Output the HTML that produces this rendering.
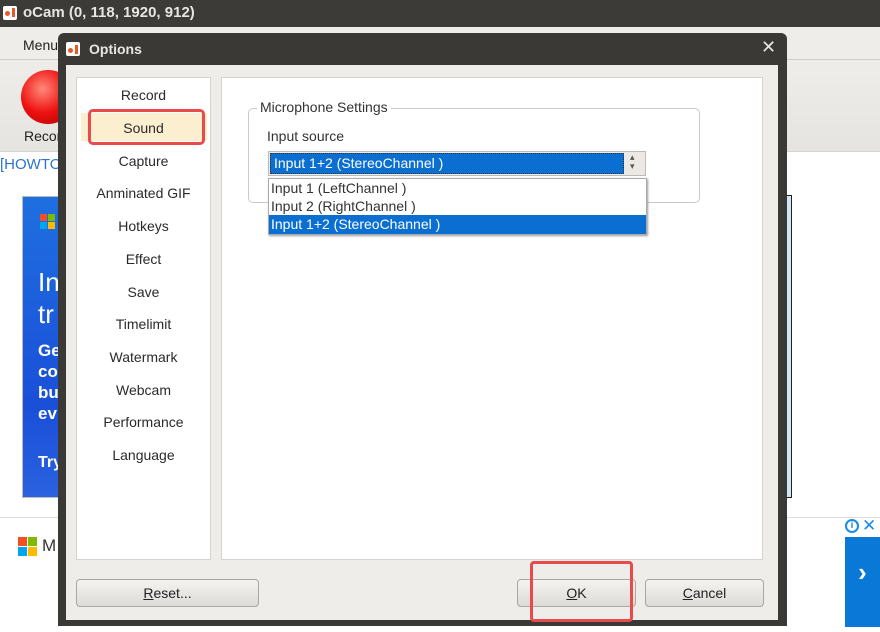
<!DOCTYPE html>
<html><head><style>
*{margin:0;padding:0;box-sizing:border-box}
body{width:880px;height:632px;overflow:hidden;background:#fff;font-family:"Liberation Sans","DejaVu Sans",sans-serif;position:relative;font-size:14px;color:#222}
.a{position:absolute}
.list div{position:absolute;left:0;width:135px;text-align:center;font-size:14px;color:#2a2a2a}
.btn{position:absolute;height:28px;border:1px solid #a9a7a3;border-radius:4px;background:linear-gradient(#f4f3f1,#dddbd7);text-align:center;line-height:26px;font-size:14px;color:#222}
</style></head><body>
<div class="a" style="left:0;top:0;width:880px;height:27px;background:#3c3b37"></div>
<div class="a" style="left:3px;top:6px;width:14px;height:14px;background:#fff;border-radius:2px"></div>
<div class="a" style="left:5px;top:11px;width:5px;height:5px;background:#e55a2b;border-radius:50%"></div>
<div class="a" style="left:12px;top:8px;width:3px;height:9px;background:#e55a2b"></div>
<div class="a" style="left:23px;top:4px;color:#e8e6e2;font-weight:bold;font-size:15px">oCam (0, 118, 1920, 912)</div>
<div class="a" style="left:0;top:27px;width:880px;height:33px;background:#efede9;border-bottom:1px solid #cfccc7"></div>
<div class="a" style="left:23px;top:37px;font-size:14px">Menu</div>
<div class="a" style="left:0;top:60px;width:880px;height:92px;background:linear-gradient(#efede9,#e6e4e0);border-bottom:1px solid #d8d5d0"></div>
<div class="a" style="left:21px;top:70px;width:54px;height:54px;border-radius:50%;background:radial-gradient(circle at 40% 35%,#ff8a7a,#e11 50%,#a00)"></div>
<div class="a" style="left:24px;top:128px;font-size:14px">Record</div>
<div class="a" style="left:0;top:156px;color:#2a74d0;font-size:15px">[HOWTO</div>
<div class="a" style="left:22px;top:196px;width:40px;height:302px;background:linear-gradient(#1e6fe0,#1a4fd8 70%,#2a62e0);border:1px solid #bbb"></div>
<div class="a" style="left:40px;top:214px;width:7px;height:7px;background:#f25022"></div>
<div class="a" style="left:48px;top:214px;width:7px;height:7px;background:#7fba00"></div>
<div class="a" style="left:40px;top:222px;width:7px;height:7px;background:#00a4ef"></div>
<div class="a" style="left:48px;top:222px;width:7px;height:7px;background:#ffb900"></div>
<div class="a" style="left:38px;top:266px;color:#fff;font-size:26px;line-height:32px">In<br>tr</div>
<div class="a" style="left:38px;top:340px;color:#fff;font-size:17px;font-weight:bold;line-height:21px">Ge<br>co<br>bu<br>ev</div>
<div class="a" style="left:38px;top:454px;color:#fff;font-size:16px;font-weight:bold">Try</div>
<div class="a" style="left:786px;top:195px;width:6px;height:303px;border:1px solid #222;background:#cfe6fa"></div>
<div class="a" style="left:0;top:517px;width:880px;height:1px;background:#ddd"></div>
<div class="a" style="left:18px;top:537px;width:9px;height:9px;background:#f25022"></div>
<div class="a" style="left:28px;top:537px;width:9px;height:9px;background:#7fba00"></div>
<div class="a" style="left:18px;top:547px;width:9px;height:9px;background:#00a4ef"></div>
<div class="a" style="left:28px;top:547px;width:9px;height:9px;background:#ffb900"></div>
<div class="a" style="left:42px;top:536px;font-size:17px;color:#333">M</div>
<div class="a" style="left:845px;top:537px;width:35px;height:90px;background:#0a78d7;color:#fff;font-size:26px;text-align:center;line-height:70px;font-weight:bold">›</div>
<div class="a" style="left:845px;top:519px;width:14px;height:14px;border:2px solid #1a8ce8;border-radius:50%;color:#1a8ce8;font-size:10px;text-align:center;line-height:10px;font-weight:bold">i</div>
<div class="a" style="left:862px;top:516px;color:#1a8ce8;font-size:17px">✕</div>
<div class="a" style="left:58px;top:33px;width:729px;height:593px;background:#3a3935;border-radius:6px 6px 0 0"></div>
<div class="a" style="left:66px;top:42px;width:14px;height:14px;background:#fff;border-radius:2px"></div>
<div class="a" style="left:68px;top:48px;width:5px;height:5px;background:#e55a2b;border-radius:50%"></div>
<div class="a" style="left:75px;top:45px;width:3px;height:9px;background:#e55a2b"></div>
<div class="a" style="left:89px;top:41px;color:#e8e6e2;font-weight:bold;font-size:14px">Options</div>
<div class="a" style="left:761px;top:37px;color:#e8e6e2;font-size:18px">✕</div>
<div class="a" style="left:66px;top:65px;width:712px;height:555px;background:#efede9"></div>
<div class="a" style="left:76px;top:77px;width:135px;height:483px;background:#fff;border:1px solid #d6d3ce"></div>
<div class="a" style="left:221px;top:77px;width:542px;height:483px;background:#fff;border:1px solid #d6d3ce"></div>
<div class="a" style="left:81px;top:113px;width:126px;height:28px;background:#fbefd0"></div>
<div class="a" style="left:88px;top:109px;width:117px;height:36px;border:3px solid #e94a4a;border-radius:5px"></div>
<div class="a list" style="left:76px;top:0">
<div style="top:87px">Record</div><div style="top:120px">Sound</div><div style="top:153px">Capture</div><div style="top:185px">Anminated GIF</div><div style="top:218px">Hotkeys</div><div style="top:251px">Effect</div><div style="top:284px">Save</div><div style="top:316px">Timelimit</div><div style="top:349px">Watermark</div><div style="top:382px">Webcam</div><div style="top:414px">Performance</div><div style="top:447px">Language</div>
</div>
<div class="a" style="left:248px;top:108px;width:452px;height:95px;border:1px solid #cdcac5;border-radius:5px"></div>
<div class="a" style="left:257px;top:99px;background:#fff;padding:0 3px;font-size:14px;color:#333">Microphone Settings</div>
<div class="a" style="left:267px;top:128px;font-size:14px;color:#333">Input source</div>
<div class="a" style="left:268px;top:151px;width:378px;height:25px;background:#ece9e4;border:1px solid #bbb"></div>
<div class="a" style="left:270px;top:153px;width:354px;height:21px;background:#0a6fd0;border:1px dotted #333;color:#fff;font-size:14px;line-height:19px;padding-left:3px">Input 1+2 (StereoChannel )</div>
<div class="a" style="left:630px;top:153px;font-size:9px;color:#555;line-height:9px">▴<br>▾</div>
<div class="a" style="left:268px;top:178px;width:379px;height:57px;background:#fff;border:1px solid #aaa;box-shadow:1px 1px 2px #999"></div>
<div class="a" style="left:271px;top:180px;font-size:14px;color:#333">Input 1 (LeftChannel )</div>
<div class="a" style="left:271px;top:198px;font-size:14px;color:#333">Input 2 (RightChannel )</div>
<div class="a" style="left:269px;top:215px;width:377px;height:19px;background:#0a6fd0;color:#fff;font-size:14px;line-height:19px;padding-left:2px">Input 1+2 (StereoChannel )</div>
<div class="btn" style="left:76px;top:579px;width:183px"><u>R</u>eset...</div>
<div class="btn" style="left:517px;top:579px;width:119px"><u>O</u>K</div>
<div class="btn" style="left:645px;top:579px;width:119px"><u>C</u>ancel</div>
<div class="a" style="left:530px;top:561px;width:103px;height:61px;border:3px solid #e94a4a;border-radius:4px"></div>
</body></html>
